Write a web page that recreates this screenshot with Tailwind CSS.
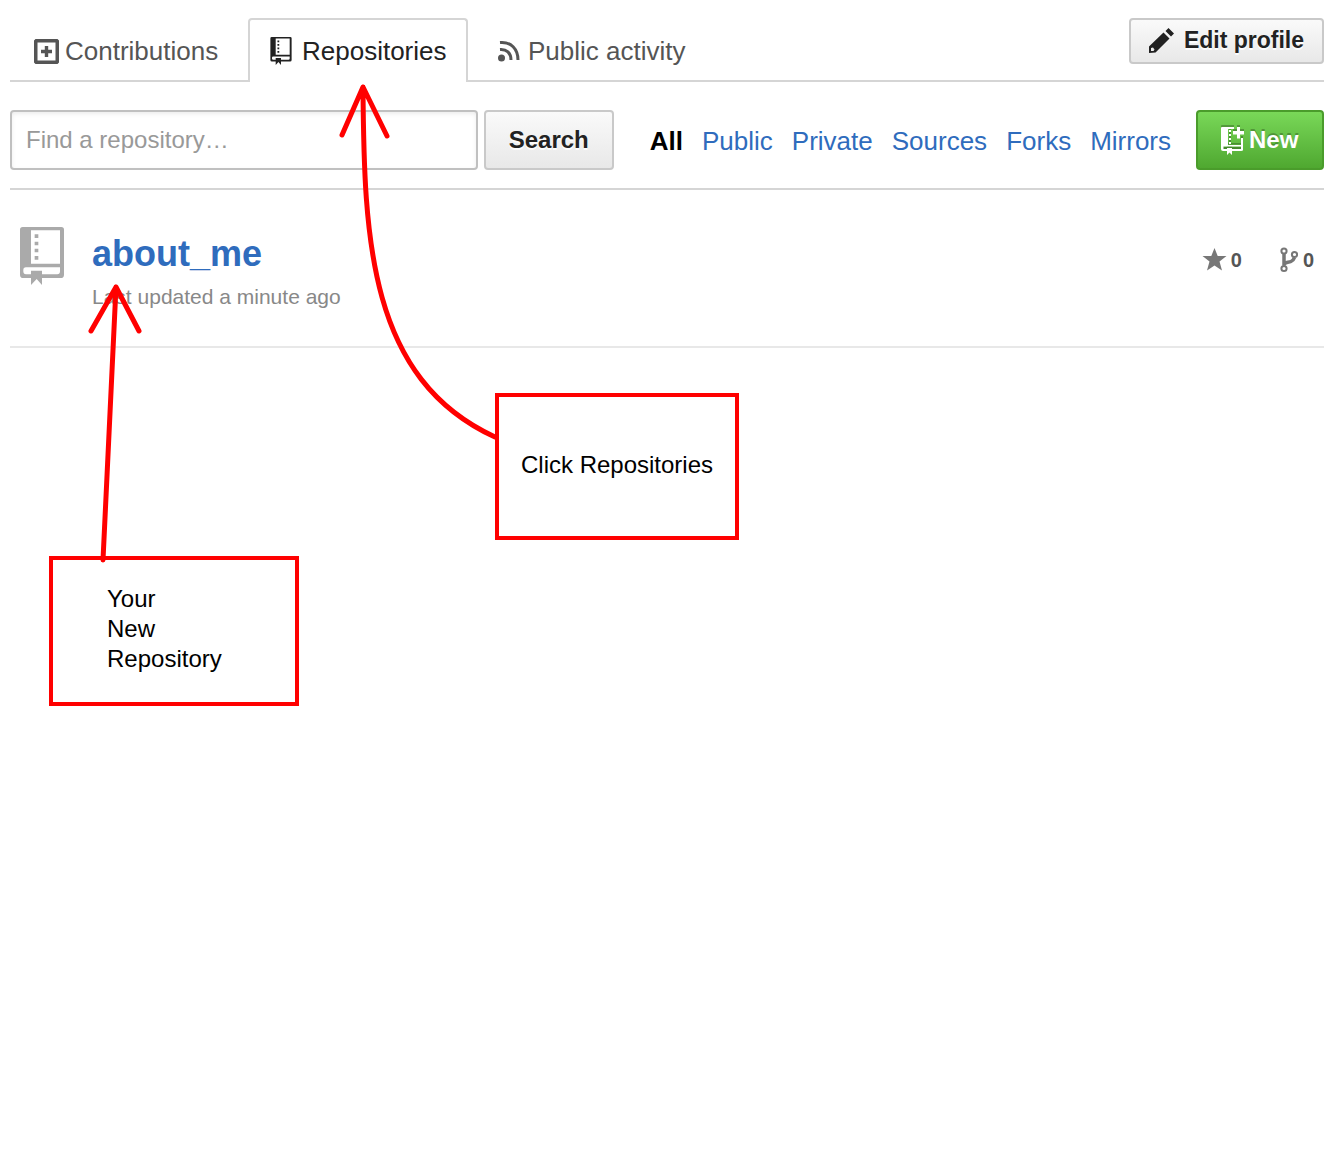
<!DOCTYPE html>
<html lang="en">
<head>
<meta charset="utf-8">
<title>Repositories</title>
<script src="https://cdn.jsdelivr.net/npm/@tailwindcss/browser@4"></script>
</head>
<body class="relative min-h-screen bg-white pt-[18px] pr-[14px] pl-[10px] font-['Liberation_Sans',Arial,sans-serif] text-[#555]">
<svg class="hidden" aria-hidden="true">
  <symbol id="repo" viewBox="0 0 132 174">
    <path fill="currentColor" fill-rule="evenodd" d="M8 0H124Q132 0 132 8V143Q132 153 122 153H66V174L50 156L33 174V153H10Q0 153 0 143V8Q0 0 8 0ZM33 10V110H120V10ZM18 121Q10 121 10 129V133Q10 142 18 142H33V131H66V142H112Q120 142 120 133V121Z"/>
    <path fill="currentColor" d="M44 22h11v11H44zM44 44h11v11H44zM44 65h11v11H44zM44 87h11v11H44z"/>
  </symbol>
</svg>

<header class="flex h-16 items-start border-b-2 border-[#d5d5d5]">
  <nav class="flex h-16 text-[26px] leading-[30px]">
    <a href="#" class="flex w-[238px] items-center pt-[2px] pl-6">
      <svg class="mr-[6px] h-[25px] w-[25px]" viewBox="0 0 25 25"><path fill="currentColor" fill-rule="evenodd" d="M1.500 0H23.500L25 1.500V23.500L23.500 25H1.500L0 23.500V1.500ZM3.500 3.500V21.500H21.500V3.500ZM10.800 7H14.200V10.800H18V14.200H14.200V18H10.800V14.200H7V10.800H10.800Z"/></svg>
      Contributions</a>
    <a href="#" class="flex w-[220px] items-center rounded-t-[4px] border-2 border-b-0 border-[#d5d5d5] bg-white pl-5 text-[#222]">
      <svg class="mr-[10px] h-[28px] w-[22px]"><use href="#repo"/></svg>
      Repositories</a>
    <a href="#" class="flex items-center pt-[2px] pl-[30px]">
      <svg class="mr-2 h-[22px] w-[22px]" viewBox="0 0 22 22" fill="none" stroke="currentColor" stroke-width="3"><circle cx="3.500" cy="18" r="3.500" fill="currentColor" stroke="none"/><path d="M2 9.500C8.500 9 13 13 13 20M2 2.500C13 1.500 20 9 20 20"/></svg>
      Public activity</a>
  </nav>
  <button class="ml-auto flex h-[46px] items-center rounded-[4px] border-2 border-[#c9c9c9] bg-linear-to-b from-[#fafafa] to-[#e8e8e8] px-[18px] pb-[2px] text-[23px] leading-7 font-bold text-[#222] text-shadow-[0_2px_0_#ffffffe6]">
    <svg class="mr-[10px] h-[25px] w-[25px]" viewBox="0 0 25 25" fill="currentColor"><path d="M16.500 3L19.500 0L25 5.500L22 8.500ZM14.500 4.500L20.500 10.500L6.500 24.500L0 25V18.500ZM2 20V23H4.500L5.500 21.500L4 19.500Z" fill-rule="evenodd"/></svg>
    Edit profile</button>
</header>

<section class="mt-7 flex h-20 items-start border-b-2 border-[#d5d5d5]">
  <form class="flex flex-1 gap-[6px]">
    <input type="text" aria-label="Find a repository" placeholder="Find a repository…" class="h-[60px] min-w-0 flex-1 rounded-[4px] border-2 border-[#c0c0c0] bg-white px-[14px] text-2xl leading-7 shadow-[inset_0_2px_4px_#00000013] placeholder:text-[#999]">
    <button type="button" class="h-[60px] w-[130px] rounded-[4px] border-2 border-[#c9c9c9] bg-linear-to-b from-[#fafafa] to-[#e8e8e8] text-2xl leading-7 font-bold text-[#222] text-shadow-[0_2px_0_#ffffffe6]">Search</button>
  </form>
  <nav class="ml-9 flex h-[60px] items-center gap-[19px] pt-[2px] text-[26px] leading-[30px] text-[#2f6cbd]">
    <a href="#" class="font-bold text-black">All</a>
    <a href="#">Public</a>
    <a href="#">Private</a>
    <a href="#">Sources</a>
    <a href="#">Forks</a>
    <a href="#">Mirrors</a>
  </nav>
  <button class="ml-[25px] flex h-[60px] w-32 items-center rounded-[4px] border-2 border-[#4a9c2b] bg-linear-to-b from-[#79d858] to-[#4fa830] pl-[23px] text-2xl leading-7 font-bold text-white text-shadow-[0_-2px_0_#00000040]">
    <svg class="mr-1 h-[29px] w-6 drop-shadow-[0_-2px_0_#00000040]" viewBox="0 0 24 29" fill="currentColor"><path fill-rule="evenodd" d="M1 1H13V3H7V19H20V12H22V24Q22 25 20 25H11V29L8.500 26.500L6 29V25H2Q0 25 0 23V2Q0 1 1 1ZM2.500 20.500V23H6V22H11V23H20V20.500Z"/><path d="M16 1H19V5H23V8.500H19V12.500H16V8.500H12V5H16ZM8 4h2v2H8zM8 8h2v2H8zM8 12h2v2H8zM8 16h2v2H8z"/></svg>
    New</button>
</section>

<main>
  <article class="flex h-[158px] items-start border-b-2 border-[#e8e8e8] px-[10px] pt-[37px]">
    <svg class="mr-7 h-[58px] w-11 text-[#aaa]"><use href="#repo"/></svg>
    <div>
      <h2 class="text-4xl leading-[54px] font-bold text-[#2f6cbd]"><a href="#">about_me</a></h2>
      <p class="mt-1 text-[21px] leading-6 text-[#888]">Last updated a minute ago</p>
    </div>
    <div class="ml-auto flex gap-[38px] pt-[19px] text-xl leading-7 font-bold">
      <a href="#" aria-label="Stars" class="flex items-center"><svg class="mr-1 h-6 w-[25px] text-[#777]" viewBox="0 0 25 24"><path fill="currentColor" d="M12.500 0L15.700 8H24.500L17.500 13.500L20 22.500L12.500 17.500L5 22.500L7.500 13.500L0.500 8H9.300Z"/></svg>0</a>
      <a href="#" aria-label="Forks" class="flex items-center"><svg class="mr-[5px] h-[26px] w-[18px] text-[#777]" viewBox="0 0 18 26" fill="none" stroke="currentColor" stroke-width="2"><circle cx="4" cy="4" r="2.600"/><circle cx="14.500" cy="7.500" r="2.600"/><circle cx="4" cy="21.500" r="2.600"/><path stroke-width="3.500" d="M4 7V18.500M4 18C5 14.500 8 16 11 14.500C13.500 13.500 14 12 14.500 10.500"/></svg>0</a>
    </div>
  </article>
</main>

<!-- Instruction callouts and arrows laid over the page -->
<aside class="text-2xl leading-[30px] text-black">
  <div class="absolute top-[393px] left-[495px] flex h-[147px] w-[244px] items-center justify-center border-4 border-[#f00] pb-1">Click Repositories</div>
  <div class="absolute top-[556px] left-[49px] flex h-[150px] w-[250px] items-center border-4 border-[#f00] pb-1 pl-[54px]">Your<br>New<br>Repository</div>
  <svg class="pointer-events-none absolute top-0 left-0 h-[706px] w-[740px]" viewBox="0 0 740 706" fill="none" stroke="#f00" stroke-width="5" stroke-linecap="round" stroke-linejoin="round" aria-hidden="true">
    <path d="M342 135L363 87L387 136M363 87C364 240 369 379 495 437"/>
    <path d="M91 331L116 287L139 331M116 287L103 560"/>
  </svg>
</aside>
</body>
</html>
